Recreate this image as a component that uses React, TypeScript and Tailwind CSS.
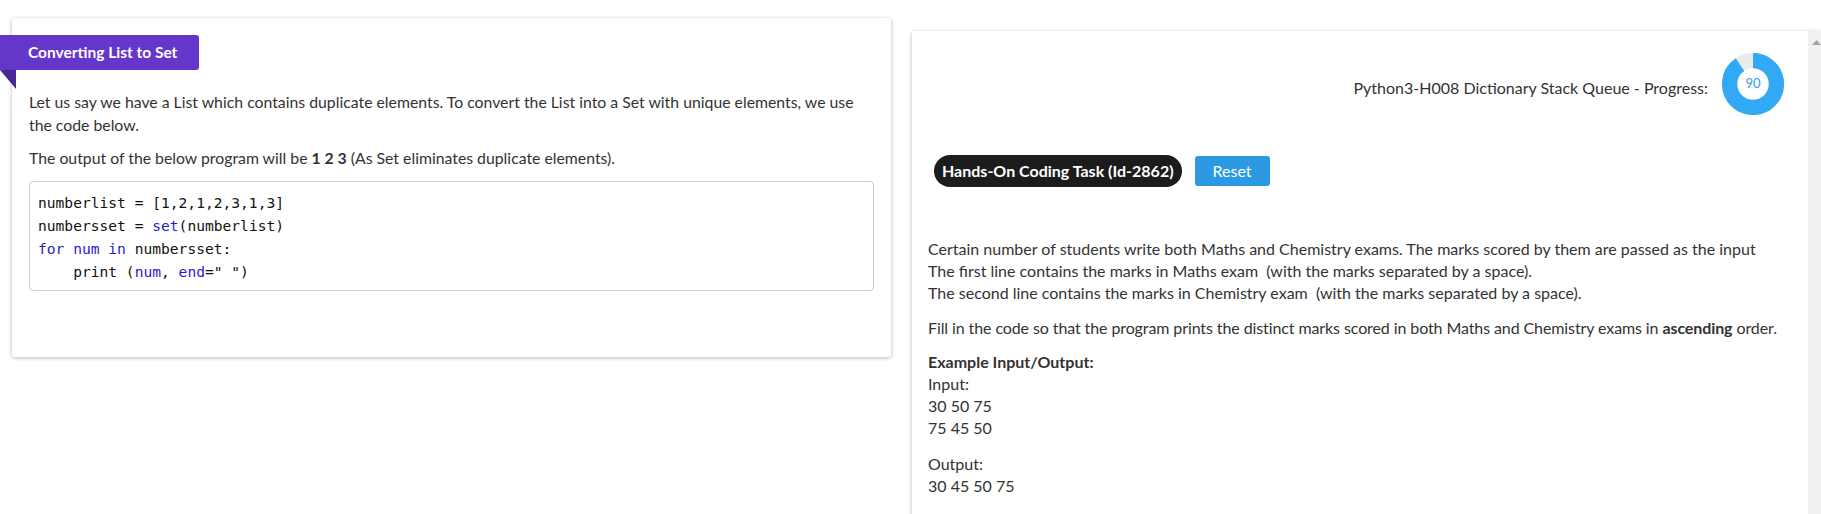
import React from "react";

function Donut() {
  const r = 23.4;
  const c = 2 * Math.PI * r;
  return (
    <div className="relative w-[62px] h-[62px] shrink-0">
      <svg width="62" height="62" viewBox="0 0 62 62">
        <circle cx="31" cy="31" r={r} fill="none" stroke="#ebebeb" strokeWidth="15.3" />
        <circle
          cx="31"
          cy="31"
          r={r}
          fill="none"
          stroke="#31a9f5"
          strokeWidth="15.3"
          strokeDasharray={`${c * 0.9} ${c}`}
          transform="rotate(-90 31 31)"
        />
      </svg>
      <div className="absolute inset-0 flex items-center justify-center text-[13px] text-[#31a0ea] font-['Lato',sans-serif]">
        90
      </div>
    </div>
  );
}

export default function App() {
  const kw = "text-[#1f1fc8]";
  const vr = "text-[#2a1ad6]";
  return (
    <div className="w-[1821px] h-[514px] overflow-hidden bg-white flex items-start font-['Lato',sans-serif] text-[#333]">
      {/* Left card */}
      <div className="ml-[12px] mt-[18px] w-[879px] h-[339px] shrink-0 bg-white rounded-[3px] shadow-[0_1px_4px_rgba(0,0,0,0.28)] pt-[17px] px-[17px]">
        <div className="relative -ml-[29px] w-[199px] h-[35px] bg-[#6436c9] rounded-r-[3px] flex items-center pl-[28px] text-white font-bold text-[15.5px]">
          Converting List to Set
          <svg className="absolute left-0 top-full" width="16" height="19" viewBox="0 0 16 19">
            <polygon points="0,0 16,0 16,19" fill="#4a2796" />
          </svg>
        </div>
        <p className="mt-[21px] text-[15.8px] leading-[22.5px] text-[#333]">
          Let us say we have a List which contains duplicate elements. To convert the List into a Set with unique elements, we use
          <br />
          the code below.
        </p>
        <p className="mt-[11px] text-[15.8px] leading-[22.5px] text-[#333]">
          The output of the below program will be <b>1 2 3</b> (As Set eliminates duplicate elements).
        </p>
        <pre className="mt-[11px] border border-[#cfcfcf] rounded-[4px] pt-[9px] pb-[7px] px-[8px] font-['DejaVu_Sans_Mono',monospace] text-[14.6px] leading-[23px] text-[#111]">
          <div>numberlist = [1,2,1,2,3,1,3]</div>
          <div>
            numbersset = <span className={kw}>set</span>(numberlist)
          </div>
          <div>
            <span className={kw}>for</span> <span className={vr}>num</span> <span className={kw}>in</span> numbersset:
          </div>
          <div>
            {"    "}print (<span className={vr}>num</span>, <span className={vr}>end</span>=" ")
          </div>
        </pre>
      </div>

      {/* Right card */}
      <div className="ml-[21px] mt-[31px] flex-1 min-w-0 h-[540px] bg-white rounded-t-[3px] shadow-[0_1px_4px_rgba(0,0,0,0.28)] flex">
        <div className="flex-1 min-w-0 pl-[16px] pr-[24px] pt-[22px]">
          <div className="flex items-center justify-end h-[62px]">
            <span className="mt-[8px] mr-[14px] text-[16px] text-[#333]">
              Python3-H008 Dictionary Stack Queue - Progress:
            </span>
            <Donut />
          </div>
          <div className="mt-[40px] flex items-center">
            <span className="ml-[6px] h-[32px] px-[8px] rounded-full bg-[#1c1c1c] text-white font-bold text-[16px] flex items-center">
              Hands-On Coding Task (Id-2862)
            </span>
            <button className="ml-[13px] w-[75px] h-[30px] rounded-[3px] bg-[#2b9ae2] text-white text-[16px] flex items-center justify-center">
              Reset
            </button>
          </div>
          <div className="mt-[51px] text-[16px] leading-[22px] text-[#333] whitespace-nowrap">
            <p>
              Certain number of students write both Maths and Chemistry exams. The marks scored by them are passed as the input
              <br />
              The first line contains the marks in Maths exam&nbsp; (with the marks separated by a space).
              <br />
              The second line contains the marks in Chemistry exam&nbsp; (with the marks separated by a space).
            </p>
            <p className="mt-[13px] tracking-[-0.1px]">
              Fill in the code so that the program prints the distinct marks scored in both Maths and Chemistry exams in <b>ascending</b> order.
            </p>
            <p className="mt-[12px] font-bold">Example Input/Output:</p>
            <p>Input:</p>
            <p>30 50 75</p>
            <p>75 45 50</p>
            <p className="mt-[14px]">Output:</p>
            <p>30 45 50 75</p>
          </div>
          <div className="mt-[17px] ml-[576px] w-[245px] border-t-2 border-[#cccccc]" />
        </div>
        <div className="w-[13px] shrink-0 bg-[#f1f1f1] relative">
          <svg className="absolute left-[4px] top-[9px]" width="9" height="5" viewBox="0 0 9 5">
            <polygon points="0,5 4.5,0 9,5" fill="#a3a3a3" />
          </svg>
        </div>
      </div>
    </div>
  );
}
